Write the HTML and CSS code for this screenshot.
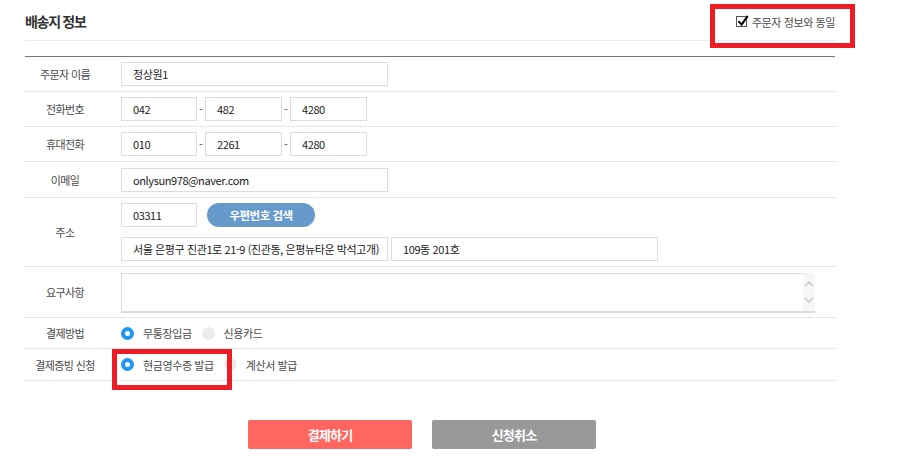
FILE: index.html
```html
<!DOCTYPE html>
<html lang="ko">
<head>
<meta charset="utf-8">
<link rel="stylesheet" href="styles.css">
</head>
<body>
<div class="page">
  <div class="wrap">
    <div class="head">
      <h2 class="title">배송지 정보</h2>
      <div class="same">
        <span class="cbox"><svg width="14" height="14" viewBox="0 0 14 14"><path d="M2.5 7.2 L5.6 10.6 L11.8 1.8" fill="none" stroke="#000" stroke-width="2"/></svg></span>
        <span class="same-txt">주문자 정보와 동일</span>
      </div>
    </div>
    <div class="form">
      <div class="row h34">
        <div class="lbl">주문자 이름</div>
        <div class="fld"><div class="box w266">정상원1</div></div>
      </div>
      <div class="row h34">
        <div class="lbl">전화번호</div>
        <div class="fld phone"><div class="box w75">042</div><span class="dash">-</span><div class="box w76">482</div><span class="dash">-</span><div class="box w76">4280</div></div>
      </div>
      <div class="row h34">
        <div class="lbl">휴대전화</div>
        <div class="fld phone"><div class="box w75">010</div><span class="dash">-</span><div class="box w76">2261</div><span class="dash">-</span><div class="box w76">4280</div></div>
      </div>
      <div class="row h35">
        <div class="lbl">이메일</div>
        <div class="fld"><div class="box w266">onlysun978@naver.com</div></div>
      </div>
      <div class="row h68">
        <div class="lbl">주소</div>
        <div class="fld addr">
          <div class="line"><div class="box w75">03311</div><span class="zipbtn">우편번호 검색</span></div>
          <div class="line gap4"><div class="box w266">서울 은평구 진관1로 21-9 (진관동, 은평뉴타운 박석고개)</div><div class="box w266">109동 201호</div></div>
        </div>
      </div>
      <div class="row h50">
        <div class="lbl">요구사항</div>
        <div class="fld">
          <div class="memo">
            <div class="memo-area"></div>
            <div class="sbar">
              <svg width="12" height="10" viewBox="0 0 12 10"><path d="M2 7 L6 3 L10 7" fill="none" stroke="#c8c8c8" stroke-width="1.5"/></svg>
              <svg width="12" height="10" viewBox="0 0 12 10"><path d="M2 3 L6 7 L10 3" fill="none" stroke="#c8c8c8" stroke-width="1.5"/></svg>
            </div>
          </div>
        </div>
      </div>
      <div class="row h30">
        <div class="lbl">결제방법</div>
        <div class="fld radios">
          <span class="opt"><span class="radio on"></span>무통장입금</span>
          <span class="opt"><span class="radio"></span>신용카드</span>
        </div>
      </div>
      <div class="row h31">
        <div class="lbl">결제증빙 신청</div>
        <div class="fld radios">
          <span class="opt"><span class="radio on"></span>현금영수증 발급</span>
          <span class="opt"><span class="radio"></span>계산서 발급</span>
        </div>
      </div>
    </div>
    <div class="btns">
      <span class="btn pay">결제하기</span>
      <span class="btn cancel">신청취소</span>
    </div>
  </div>
  <div class="mark mark-top"></div>
  <div class="mark mark-bottom"></div>
</div>
</body>
</html>
```
FILE: styles.css
```css
* { box-sizing: border-box; }
html, body { margin: 0; padding: 0; background: #fff; }
body {
  font-family: "Noto Sans CJK KR", "Noto Sans", sans-serif;
  color: #555;
  width: 901px;
  height: 460px;
  overflow: hidden;
}
.page { position: relative; width: 901px; height: 460px; }
.wrap { margin-left: 25px; width: 810px; }

.head {
  height: 41px;
  border-bottom: 1px solid #ebebeb;
  display: flex;
  align-items: center;
  justify-content: space-between;
}
.title {
  margin: 0;
  font-size: 14px;
  font-weight: 700;
  letter-spacing: -1.3px;
  color: #333;
  line-height: 1;
  margin-top: 2px;
}
.same {
  display: flex;
  align-items: center;
  font-size: 11px;
  letter-spacing: -0.4px;
  color: #4a4a4a;
  margin-top: 3px;
}
.cbox {
  width: 11px;
  height: 11px;
  border: 1px solid #555;
  position: relative;
  margin-right: 5px;
  background: #fff;
}
.cbox svg { position: absolute; left: -1px; top: -3px; }

.form { margin-top: 15px; border-top: 1px solid #777; }
.row {
  display: flex;
  align-items: center;
  border-bottom: 1px dotted #cfcfcf;
}
.h34 { height: 35px; }
.h35 { height: 36px; }
.h68 { height: 69px; }
.h50 { height: 51px; }
.h30 { height: 31px; }
.h31 { height: 32px; }

.lbl {
  width: 80px;
  text-align: center;
  font-size: 11px;
  letter-spacing: -0.6px;
  color: #4a4a4a;
}
.fld {
  margin-left: 16px;
  display: flex;
  align-items: center;
}
.box {
  height: 24px;
  border: 1px solid #dcdcdc;
  padding-left: 11px;
  font-size: 11px;
  letter-spacing: -0.4px;
  color: #222;
  display: flex;
  align-items: center;
  white-space: nowrap;
  overflow: hidden;
}
.w266 { width: 267px; }
.w75 { width: 76px; }
.w76 { width: 77px; }
.dash { width: 8px; text-align: center; font-size: 11px; color: #555; }

.addr { flex-direction: column; align-items: flex-start; gap: 10px; }
.line { display: flex; align-items: center; }
.gap4 { gap: 3px; }
.zipbtn {
  margin-left: 10px;
  width: 108px;
  height: 24px;
  border-radius: 12px;
  background: #6699cc;
  color: #fff;
  font-size: 11.5px;
  font-weight: 700;
  letter-spacing: -0.5px;
  display: flex;
  align-items: center;
  justify-content: center;
}

.memo {
  width: 694px;
  height: 40px;
  display: flex;
  margin-top: 1px;
}
.memo-area {
  flex: 1;
  border-top: 1px solid #dcdcdc;
  border-left: 1px solid #dcdcdc;
  border-bottom: 2px solid #dcdcdc;
}
.sbar {
  width: 12px;
  background: #f7f7f7;
  border-bottom: 2px solid #dcdcdc;
  display: flex;
  flex-direction: column;
  justify-content: center;
  gap: 6px;
}
.sbar svg { display: block; }

.radios { gap: 10px; }
.opt {
  display: flex;
  align-items: center;
  font-size: 11px;
  letter-spacing: -0.4px;
  color: #4a4a4a;
}
.radio {
  width: 13px;
  height: 13px;
  border-radius: 50%;
  background: #ebebeb;
  margin-right: 9px;
  display: inline-block;
}
.radio.on {
  background: #fff;
  border: 4px solid #2196f3;
}

.btns {
  display: flex;
  gap: 20px;
  margin-top: 39px;
  margin-left: 223px;
}
.btn {
  width: 164px;
  height: 29px;
  border-radius: 2px;
  color: #fff;
  font-size: 13px;
  font-weight: 700;
  letter-spacing: -0.8px;
  display: flex;
  align-items: center;
  justify-content: center;
}
.pay { background: #ff6660; }
.cancel { background: #999999; }

.mark {
  position: absolute;
  border: 5px solid #ee1c25;
}
.mark-top { left: 710px; top: 4px; width: 145px; height: 44px; }
.mark-bottom { left: 112px; top: 349px; width: 120px; height: 41px; }
```
